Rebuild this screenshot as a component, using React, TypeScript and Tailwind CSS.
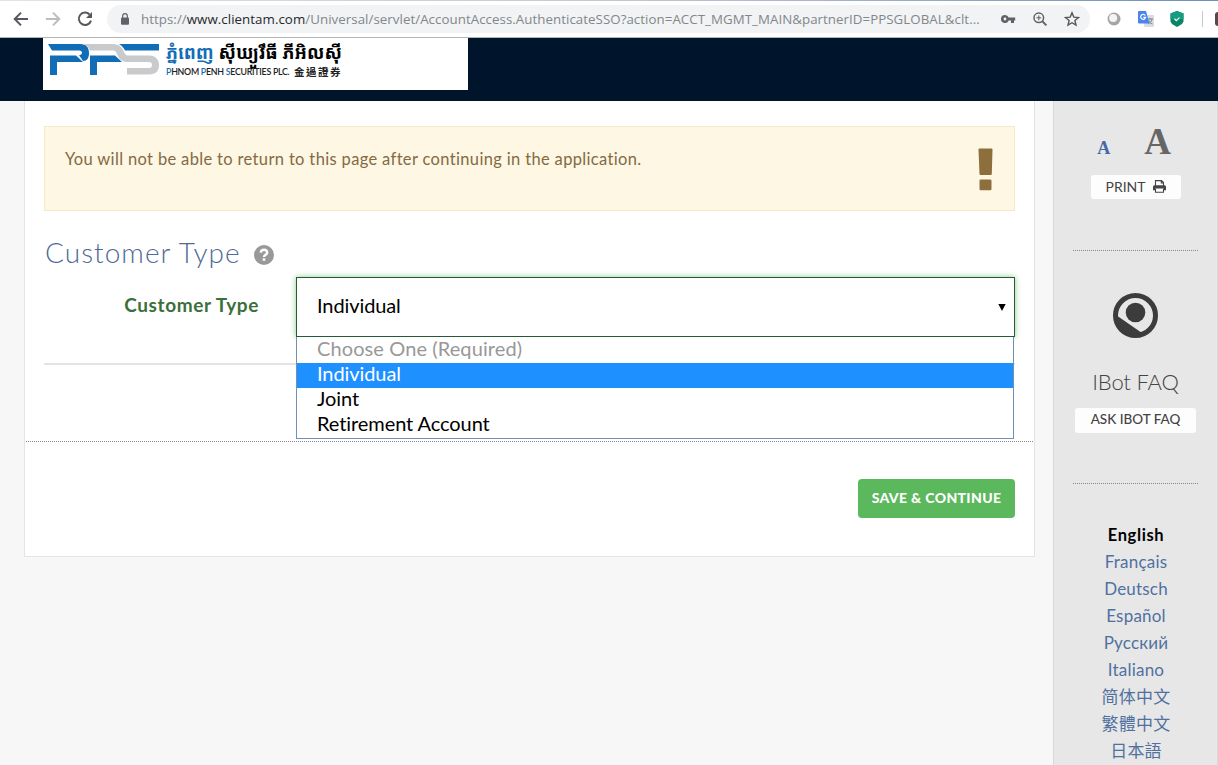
import React from "react";

const languages = ["Français", "Deutsch", "Español", "Русский", "Italiano", "简体中文", "繁體中文", "日本語"];

function BrowserBar() {
  return (
    <div className="h-[38px] shrink-0 border-b border-[#b4b4b4] bg-white font-['Open_Sans',sans-serif]">
      <div className="h-px bg-gradient-to-r from-[#dfe3ea] via-[#c3c8d3] to-[#6f8fb5]" />
      <div className="flex h-9 items-center">
        <svg className="ml-3 h-[18px] w-[18px] shrink-0" viewBox="0 0 18 18" fill="none" stroke="#55585c" strokeWidth="2">
          <path d="M16 9H3M9 2.6 2.7 9 9 15.4" />
        </svg>
        <svg className="ml-[14px] h-[18px] w-[18px] shrink-0" viewBox="0 0 18 18" fill="none" stroke="#bcbdbf" strokeWidth="2">
          <path d="M2 9h13M9 2.6 15.3 9 9 15.4" />
        </svg>
        <svg className="ml-[14px] h-[18px] w-[18px] shrink-0" viewBox="0 0 18 18" fill="none" stroke="#55585c" strokeWidth="2">
          <path d="M13.6 4.5A6.2 6.2 0 1 0 15 10.6" />
          <path d="M16 2v6h-6z" fill="#55585c" stroke="none" />
        </svg>
        <div className="ml-[13px] flex h-7 w-[983px] shrink-0 items-center rounded-full bg-[#f1f3f4]">
          <svg className="ml-[13px] h-3 w-[10px] shrink-0" viewBox="0 0 10 12">
            <rect x="1" y="4.5" width="8" height="7.2" rx="1" fill="#5f6368" />
            <path d="M2.7 5V3a2.3 2.3 0 0 1 4.6 0v2" fill="none" stroke="#5f6368" strokeWidth="1.2" />
          </svg>
          <div className="ml-[11px] w-[848px] shrink-0 whitespace-nowrap text-[13.3px] leading-7 tracking-[0.05px] text-[#83878c]">
            https://<span className="text-[#27292d]">www.clientam.com</span>/Universal/servlet/AccountAccess.AuthenticateSSO?action=ACCT_MGMT_MAIN&amp;partnerID=PPSGLOBAL&amp;clt...
          </div>
          <svg className="ml-[11px] h-4 w-4 shrink-0" viewBox="0 0 16 16">
            <path fillRule="evenodd" d="M5 4a4 4 0 1 0 3.7 5.4H11V12h3V9.4h1.2V6.6H8.7A4 4 0 0 0 5 4zm0 2.6a1.4 1.4 0 1 1 0 2.8 1.4 1.4 0 0 1 0-2.8z" fill="#5f6368" />
          </svg>
          <svg className="ml-4 h-4 w-4 shrink-0" viewBox="0 0 16 16" fill="none" stroke="#5f6368">
            <circle cx="6.8" cy="6.8" r="4.8" strokeWidth="1.5" />
            <path d="m10.4 10.4 4 4" strokeWidth="2" />
            <path d="M4.4 6.8h4.8M6.8 4.4v4.8" strokeWidth="1.1" />
          </svg>
          <svg className="ml-4 h-4 w-4 shrink-0" viewBox="0 0 16 16" fill="none" stroke="#55585c" strokeWidth="1.4">
            <path d="m8 1.8 1.8 4.3 4.7.4-3.6 3 1.1 4.6L8 11.7l-4 2.4 1.1-4.6-3.6-3 4.7-.4z" />
          </svg>
        </div>
        <svg className="ml-[17px] h-[14px] w-[14px] shrink-0" viewBox="0 0 14 14">
          <circle cx="7" cy="7" r="6.5" fill="#a5a5a5" />
          <circle cx="6.2" cy="6" r="4" fill="#f4f4f4" />
        </svg>
        <svg className="ml-[17px] h-4 w-4 shrink-0" viewBox="0 0 16 16">
          <rect x="6" y="4" width="10" height="12" rx="1" fill="#dadce0" />
          <path d="M9 8h6M12 7v1M14 8c-.5 2.5-2 4-4 5M10.5 9c.8 2 2 3.3 4 4" stroke="#6d8794" fill="none" strokeWidth="1" />
          <path d="M1 0h7l3.4 12.5H1a1 1 0 0 1-1-1V1a1 1 0 0 1 1-1z" fill="#4a84ee" />
          <path d="M7.3 4.5A2.5 2.5 0 1 0 7.6 6.4H5.3" stroke="#fff" strokeWidth="1.2" fill="none" />
        </svg>
        <svg className="ml-4 h-4 w-[14px] shrink-0" viewBox="0 0 14 16">
          <path d="M7 0 13.5 2.5V10.5L12 13 7 16 2 13 .5 10.5V2.5z" fill="#0b8468" />
          <path d="M7 0 13.5 2.5V8H.5V2.5z" fill="#149d80" />
          <path d="m4.5 7.8 1.8 1.8 3.2-3" stroke="#fff" fill="none" strokeWidth="1.3" />
        </svg>
        <div className="ml-[18px] h-4 w-px bg-[#c8c9cb]" />
        <div className="ml-3 h-[14px] w-[3px] rounded-l-full bg-[#5b4648]" />
      </div>
    </div>
  );
}

function Logo() {
  return (
    <div className="ml-[43px] flex h-[52px] w-[425px] bg-white">
      <svg className="ml-[5px] mt-1 h-[34px] w-[112px] shrink-0" viewBox="0 0 112 34">
        <path d="M0 2H32C39 2 41 6 41 11C41 16 39 19 35 19L31 13C34 13 34 11 34 10C33 8.500 32 8.500 30 8.500H4z" fill="#126db7" />
        <path d="M2 13.500H28L35 20H9V33H2z" fill="#126db7" />
        <path d="M33 2H64C70 2 73 4 75 8L77 12C78 13.500 79 13.500 81 13.500H101C108 13.500 111 18 111 23C111 29 108 32.500 101 32.500H79V26H101C103 26 104 25 104 23C104 21 103 20 101 20H80C75 20 72 18 70 14L68 10C67 8.500 66 8.500 64 8.500H42C40 4 37 2 33 2z" fill="#c9cacc" />
        <path d="M42 13.500H67L74 20H49V33H42z" fill="#126db7" />
        <path d="M71 2H111V8.500H77C75 5 74 4 71 2z" fill="#126db7" />
      </svg>
      <div className="ml-[6px] flex flex-col whitespace-nowrap">
        <div className="h-[28px] pt-[2px] font-['Noto_Sans_Khmer','Noto_Sans',sans-serif] text-[18px] font-bold leading-[24px] text-black">
          <span className="text-[#126db7]">ភ្នំពេញ</span> ស៊ីឃ្យួរឹធី ភីអិលស៊ី
        </div>
        <div className="flex items-center font-['Lato',sans-serif] text-[8.8px] font-semibold leading-3 text-[#222]">
          <span className="w-[128px] tracking-[-0.26px]">
            <span className="text-[#126db7]">P</span>HNOM <span className="text-[#126db7]">P</span>ENH <span className="text-[#126db7]">S</span>ECURITIES PLC.
          </span>
          <span className="font-['Noto_Sans_CJK_TC',sans-serif] text-[10.5px] tracking-[1.5px]">金過證券</span>
        </div>
      </div>
    </div>
  );
}

function MainCard() {
  return (
    <main className="ml-6 h-[456px] w-[1011px] shrink-0 border border-t-0 border-[#e4e4e4] bg-white">
      <div className="mx-[19px] mt-[25px] flex h-[85px] justify-between border border-[#f5e8cb] bg-[#fdf7e3]">
        <p className="ml-5 mt-[20px] text-[16.5px] leading-6 tracking-[0.345px] text-[#846a43]">You will not be able to return to this page after continuing in the application.</p>
        <svg className="mr-[21px] mt-[21px] h-[43px] w-[16px]" viewBox="0 0 16 43" fill="#8d6e3d">
          <path d="M2.500 .5H14.500Q15.500 .5 15.500 1.5L14.800 26Q14.700 27 13.700 27H3.500Q2.500 27 2.500 26L1.500 1.5Q1.500 .5 2.500 .5z" />
          <rect x="2.500" y="31.5" width="12" height="10.8" rx="1.3" />
        </svg>
      </div>
      <div className="ml-5 mt-[21px] flex h-10 items-center">
        <h1 className="text-[28px] font-light leading-10 tracking-[1.05px] text-[#4f6a96]">Customer Type</h1>
        <svg className="ml-[13px] mt-[5px] h-5 w-5" viewBox="0 0 20 20">
          <circle cx="10" cy="10" r="10" fill="#999" />
          <path d="M6.8 7.6C7 3.7 13.3 3.8 13.2 7.5C13.2 9.7 10 9.8 10 12" fill="none" stroke="#fff" strokeWidth="2.5" />
          <rect x="8.7" y="13.3" width="2.6" height="2.5" fill="#fff" />
        </svg>
      </div>
      <div className="mx-[19px] mt-[3px] h-[90px] border-b-2 border-[#e3e3e3]">
        <div className="flex pt-[2px]">
          <label className="w-[215px] whitespace-nowrap pt-[14px] text-right text-[19px] font-bold leading-7 tracking-[0.6px] text-[#3a703a]">Customer Type</label>
          <div className="relative ml-[37px] h-[60px] w-[719px]">
            <div className="flex h-[60px] items-center justify-between border border-[#265a37] bg-white pl-5 pr-2 text-[20px] text-black shadow-[0_0_6px_#8bc98b]">
              <span className="pb-[4px] tracking-[-0.1px]">Individual</span>
              <svg className="h-[7px] w-[8px]" viewBox="0 0 8 7"><path d="M.3 0h7.4L4 7z" /></svg>
            </div>
            <div className="absolute left-0 top-[60px] z-10 h-[102px] w-[718px] border border-t-0 border-[#7090b6] bg-white text-[20px] leading-[20px] tracking-[-0.08px] text-black">
              <div className="h-[26px] pl-5 pt-px tracking-[0.1px] text-[#989898]">Choose One (Required)</div>
              <div className="h-[25px] bg-[#1e90ff] pl-5 text-white">Individual</div>
              <div className="h-[25px] pl-5">Joint</div>
              <div className="h-[25px] pl-5">Retirement Account</div>
            </div>
          </div>
        </div>
      </div>
      <div className="mx-px mt-[76px] border-t border-dotted border-[#888]" />
      <div className="flex justify-end pr-[19px] pt-[37px]">
        <button className="h-[39px] w-[157px] rounded bg-[#5cb85c] pb-[2px] text-[14px] font-black tracking-[0.35px] text-white">SAVE &amp; CONTINUE</button>
      </div>
    </main>
  );
}

function Sidebar() {
  return (
    <aside className="ml-[18px] flex w-[165px] shrink-0 flex-col items-center border-x border-[#d8d8d8] bg-[#e7e7e7]">
      <div className="mt-[23px] flex h-[37px] items-baseline gap-[34px] pr-[3px] font-['Liberation_Serif',serif] font-bold">
        <span className="text-[18px] leading-9 text-[#4569a5]">A</span>
        <span className="text-[37px] leading-9 text-[#666]">A</span>
      </div>
      <button className="mt-[14px] flex h-6 w-[90px] shrink-0 items-center justify-center gap-[7px] rounded-[3px] bg-[#fdfdfd] pb-[2px] text-[14px] text-[#444]">
        PRINT
        <svg className="h-[13px] w-[13px]" viewBox="0 0 13 13">
          <path d="M2.5 6V.6H8.5L10.5 2.6V6M8.3.8V3H10.3M2.5 9V12.3H10.5V9" fill="none" stroke="#444" strokeWidth="1.1" />
          <path d="M1.5 5.3H11.5Q13 5.3 13 6.8V10.3H10.5V8.5H2.5V10.3H0V6.8Q0 5.3 1.5 5.3z" fill="#444" />
        </svg>
      </button>
      <div className="mt-[51px] w-[125px] border-t border-dotted border-[#888]" />
      <svg className="mt-[42px] h-[45px] w-[45px] shrink-0" viewBox="0 0 45 45">
        <circle cx="22.5" cy="22.5" r="20" fill="none" stroke="#3c3c3c" strokeWidth="5" />
        <circle cx="22.5" cy="19.5" r="9.8" fill="#3c3c3c" />
        <path d="M3 22 29 40Q20 47 9 39Q2 33 3 22z" fill="#3c3c3c" />
      </svg>
      <div className="mt-[30px] text-[22px] font-light leading-7 tracking-[-0.15px] text-[#444]">IBot FAQ</div>
      <button className="mt-[12px] h-[25px] w-[121px] shrink-0 rounded-[3px] bg-[#fdfdfd] pb-[3px] text-[13.5px] font-medium text-[#444]">ASK IBOT FAQ</button>
      <div className="mt-[50px] w-[125px] border-t border-dotted border-[#888]" />
      <nav className="mt-[37px] flex flex-col items-center pl-px text-[17px] leading-[27px] tracking-[0.2px] text-[#50719f]">
        <span className="h-[27px] pt-px text-[16.5px] font-bold tracking-[0.6px] text-black">English</span>
        {languages.map((l) => <span key={l}>{l}</span>)}
      </nav>
    </aside>
  );
}

export default function App() {
  return (
    <div className="flex h-[765px] w-[1218px] flex-col overflow-hidden bg-[#f7f7f7] font-['Lato','Noto_Sans_CJK_SC',sans-serif]">
      <BrowserBar />
      <header className="h-[63px] shrink-0 bg-[#00142b]"><Logo /></header>
      <div className="flex min-h-0 flex-1">
        <MainCard />
        <Sidebar />
      </div>
    </div>
  );
}
